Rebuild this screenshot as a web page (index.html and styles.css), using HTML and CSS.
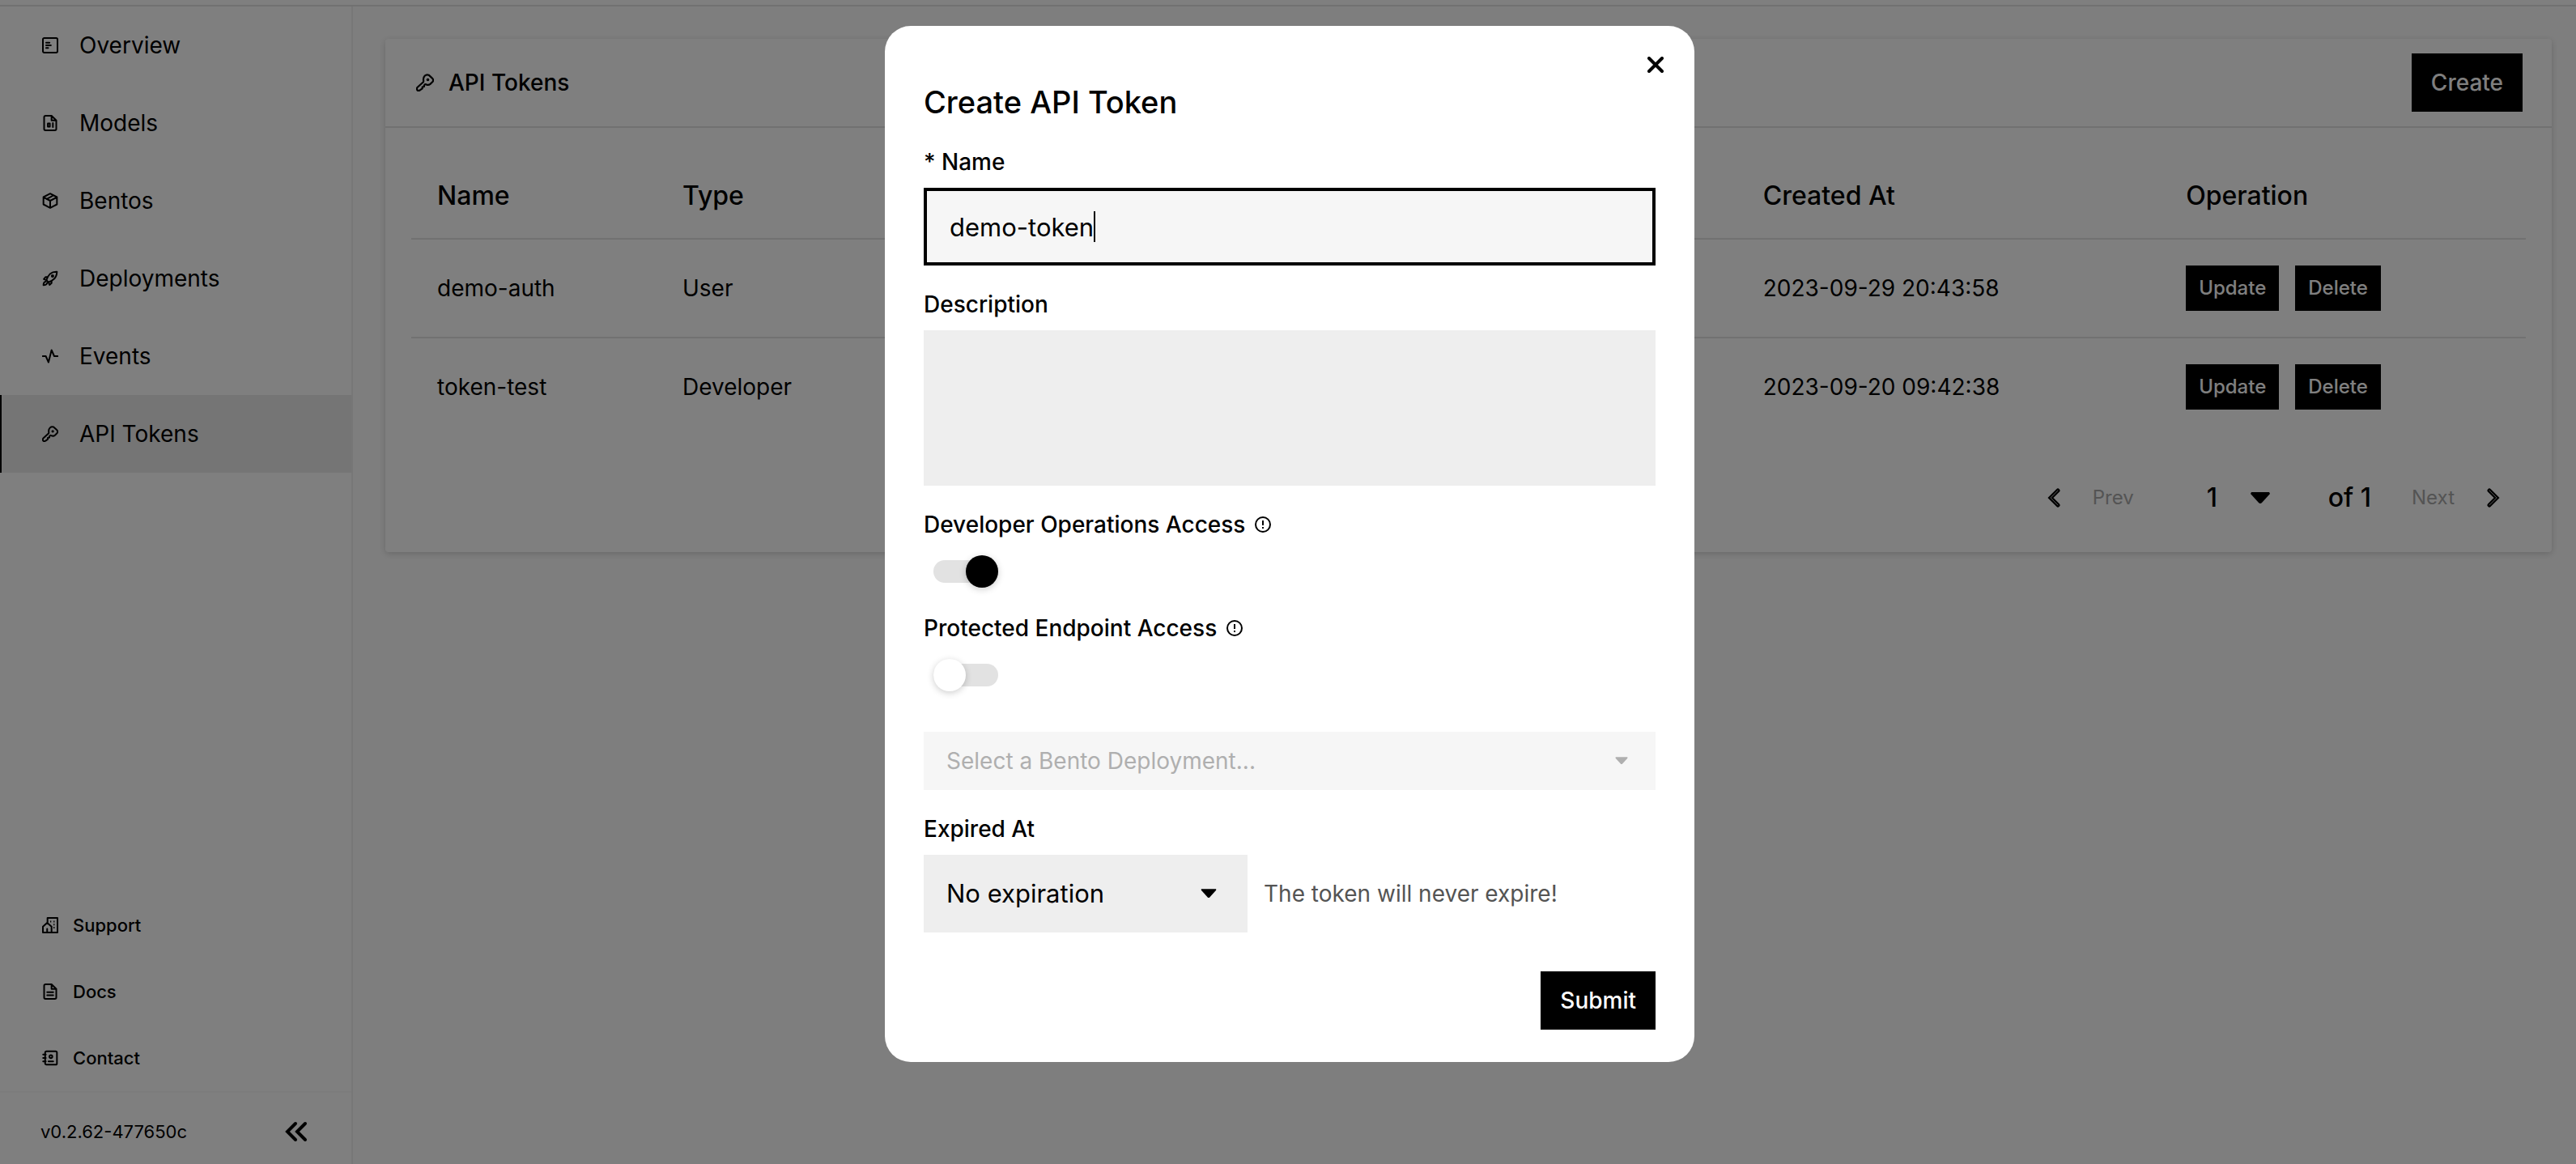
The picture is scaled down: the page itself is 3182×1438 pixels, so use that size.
FILE: index.html
```html
<!DOCTYPE html>
<html lang="en">
<head>
<meta charset="utf-8">
<title>API Tokens</title>
<link rel="stylesheet" href="styles.css">
</head>
<body>
<svg class="sprite" aria-hidden="true">
  <symbol id="i-key" viewBox="0 0 24 24"><path d="M10 9.600C9.400 6.800 10 4.600 11.800 2.800 13.200 1.400 15 1 17 1.800L22 6.400C23.400 8 23.400 9.600 22 11.200L19 14C17.600 15.200 15.600 15.400 13.800 14.600L12.200 14.200 10.800 15.800V17.400L8.400 18V20L5.600 22C4.200 23.200 2.600 23.200 1.600 22.200 .8 21.200 .8 19.800 1.600 18.600L9.800 11.200z"/><circle cx="15.800" cy="8.200" r=".8"/></symbol>
  <symbol id="i-file" viewBox="0 0 24 24"><path d="M14 1.200H5a2 2 0 0 0-2 2v17.600a2 2 0 0 0 2 2h14a2 2 0 0 0 2-2V8z M14 1.200V8h7"/></symbol>
</svg>
<div class="app">
  <header class="topbar"></header>
  <div class="body">
    <aside class="sidebar">
      <nav class="nav">
        <a class="nav-item" href="#"><svg class="icon" viewBox="0 0 24 24"><rect x="1.200" y="1.200" width="21.600" height="21.600" rx="2"/><path d="M6 8.200h5M6 12h7M6 15.800h3"/></svg>Overview</a>
        <a class="nav-item" href="#"><svg class="icon" viewBox="0 0 24 24"><use href="#i-file"/><path d="M8.500 12.500h3v5h-3zM16 12v6"/></svg>Models</a>
        <a class="nav-item" href="#"><svg class="icon" viewBox="0 0 24 24"><path d="M12 1.400l10 5.200v10.800l-10 5.200-10-5.200V6.600z M2.500 7l9.500 5 9.500-5M12 12v10M7 9.500l9.500-5.300"/></svg>Bentos</a>
        <a class="nav-item" href="#"><svg class="icon" viewBox="0 0 24 24"><path d="M9.500 17.500L6.500 14.500C7 12 9 8 12 5c3-2.600 6.500-3.200 10-3-.2 4-1 7.500-3.800 10.200C15.200 15 12 17 9.500 17.500zM8.500 10H5L2.500 13l4 1.500M14 15.500v3.500L11 21.500 9.500 17.500M5.500 16.500C3 17 2 19 2 22c3 0 5-1 5.500-3.500"/><circle cx="15.500" cy="8.500" r="1.200"/></svg>Deployments</a>
        <a class="nav-item" href="#"><svg class="icon" viewBox="0 0 24 24"><path d="M1 12h4.500L9.500 21 14 3l4 9h5"/></svg>Events</a>
        <a class="nav-item active" href="#"><svg class="icon" viewBox="0 0 24 24"><use href="#i-key"/></svg>API Tokens</a>
      </nav>
      <div class="links">
        <a class="link-item" href="#"><svg class="icon" viewBox="0 0 24 24"><path d="M8 8V1.200h14.800v21.600H1.200V14l6.300-5.500L14 14v8.800M7.500 22v-4.500"/><path class="dots" d="M12 6.500h1.500M17 6.500h1.500M17 11h1.500M17 15.500h1.500"/></svg>Support</a>
        <a class="link-item" href="#"><svg class="icon" viewBox="0 0 24 24"><use href="#i-file"/><path d="M7.500 13h9M7.500 17.500h9"/></svg>Docs</a>
        <a class="link-item" href="#"><svg class="icon" viewBox="0 0 24 24"><rect x="4.500" y="2" width="17.500" height="20" rx="2"/><path d="M1.500 7h4M1.500 12h4M1.500 17h4M9.500 17h7"/><circle cx="13" cy="10" r="2.200"/></svg>Contact</a>
      </div>
      <footer class="side-foot">
        <span>v0.2.62-477650c</span>
        <button class="collapse" type="button" aria-label="Collapse sidebar"><svg viewBox="0 0 28 28"><path d="M13 4L3 14l10 10M25 4L15 14l10 10"/></svg></button>
      </footer>
    </aside>
    <main class="main">
      <section class="card">
        <header class="card-head">
          <svg class="icon card-icon" viewBox="0 0 24 24"><use href="#i-key"/></svg>
          <h1 class="card-title">API Tokens</h1>
          <button class="btn" type="button">Create</button>
        </header>
        <div class="card-body">
          <table class="tokens">
            <thead><tr><th class="col-name">Name</th><th class="col-type">Type</th><th></th><th class="col-created">Created At</th><th class="col-ops">Operation</th></tr></thead>
            <tbody>
              <tr><td>demo-auth</td><td>User</td><td></td><td>2023-09-29 20:43:58</td><td><div class="row-actions"><button class="btn small" type="button">Update</button><button class="btn small" type="button">Delete</button></div></td></tr>
              <tr><td>token-test</td><td>Developer</td><td></td><td>2023-09-20 09:42:38</td><td><div class="row-actions"><button class="btn small" type="button">Update</button><button class="btn small" type="button">Delete</button></div></td></tr>
            </tbody>
          </table>
          <div class="pager">
            <button class="page-btn" type="button" disabled><svg class="chev" viewBox="0 0 16 24"><path d="M13 3L4 12l9 9"/><path class="inner" d="M13 3L4 12l9 9"/></svg>Prev</button>
            <div class="select-wrap page-select">
              <select aria-label="Page"><option>1</option></select>
              <svg class="caret" viewBox="0 0 24 14"><path d="M1 0h22l1 2-10 11q-2 2-4 0L0 2z"/></svg>
            </div>
            <span class="page-total">of 1</span>
            <button class="page-btn" type="button" disabled>Next<svg class="chev" viewBox="0 0 16 24"><path d="M3 3l9 9-9 9"/><path class="inner" d="M3 3l9 9-9 9"/></svg></button>
          </div>
        </div>
      </section>
    </main>
  </div>
</div>
<div class="overlay">
  <form class="modal" role="dialog" aria-modal="true" aria-labelledby="dlg-title">
    <button class="close" type="button" aria-label="Close"><svg viewBox="0 0 20 20"><path d="M2 2l16 16M18 2L2 18"/></svg></button>
    <h2 class="modal-title" id="dlg-title">Create API Token</h2>
    <label class="label" for="name">* Name</label>
    <div class="name-box"><input class="name-input" id="name" type="text" value="demo-token" size="10"><span class="cursor"></span></div>
    <label class="label" for="desc">Description</label>
    <textarea class="desc" id="desc"></textarea>
    <label class="label" for="dev">Developer Operations Access <svg class="info" viewBox="0 0 20 20"><circle cx="10" cy="10" r="9"/><path d="M10 5v6M10 13v2"/></svg></label>
    <div class="toggle-row"><input class="toggle" id="dev" type="checkbox" checked></div>
    <label class="label" for="end">Protected Endpoint Access <svg class="info" viewBox="0 0 20 20"><circle cx="10" cy="10" r="9"/><path d="M10 5v6M10 13v2"/></svg></label>
    <div class="toggle-row last"><input class="toggle" id="end" type="checkbox"></div>
    <div class="select-wrap deployment">
      <select aria-label="Bento Deployment" disabled><option>Select a Bento Deployment...</option></select>
      <svg class="caret" viewBox="0 0 24 14"><path d="M1 0h22v2L13 13h-2L1 2z"/></svg>
    </div>
    <label class="label" for="exp">Expired At</label>
    <div class="expiry">
      <div class="select-wrap expiration">
        <select id="exp"><option>No expiration</option></select>
        <svg class="caret" viewBox="0 0 24 14"><path d="M1 0h22v2L13 13h-2L1 2z"/></svg>
      </div>
      <span class="hint">The token will never expire!</span>
    </div>
    <div class="actions"><button class="btn" type="submit">Submit</button></div>
  </form>
</div>
</body>
</html>
```
FILE: styles.css
```css
* { box-sizing: border-box; }
body {
  margin: 0;
  background: #fff;
  color: #000;
  font: 28px/40px Inter, "Liberation Sans", sans-serif;
}
button, input, select, textarea { font: inherit; color: inherit; border: 0; border-radius: 0; margin: 0; }
button { cursor: pointer; }
svg { display: block; fill: none; stroke: currentColor; }
.sprite { position: absolute; width: 0; height: 0; }

/* Page frame */
.app { display: flex; flex-direction: column; height: 100vh; }
.topbar { height: 8px; border-bottom: 2px solid #e2e2e2; }
.body { display: flex; flex: 1; min-height: 0; }

/* Sidebar */
.sidebar { display: flex; flex-direction: column; flex: none; width: 436px; border-right: 2px solid #eee; }
.nav-item, .link-item { display: flex; align-items: center; color: inherit; text-decoration: none; }
.nav-item { height: 96px; gap: 26px; padding: 0 50px; border-left: 2px solid transparent; }
.nav-item.active { background: #ebebeb; border-left-color: #000; }
.icon { width: 20px; height: 20px; flex: none; stroke-width: 2.4; stroke-linejoin: round; stroke-linecap: round; }
.dots { stroke-linecap: butt; }
.links { margin-top: auto; }
.link-item { height: 82px; gap: 18px; padding: 0 52px; font-size: 22px; font-weight: 500; }
.side-foot {
  display: flex; align-items: center; justify-content: space-between;
  height: 90px; padding: 8px 54px 0 50px; border-top: 2px solid #f8f8f8; font-size: 22px;
}
.collapse { width: 28px; height: 28px; padding: 0; background: none; }
.collapse svg { width: 28px; height: 28px; stroke-width: 4; stroke-linecap: round; }

/* Token list */
.main { flex: 1; padding: 40px 30px 40px 40px; background: #fdfdfd; }
.card { background: #fff; border-radius: 4px; box-shadow: 0 2px 8px rgba(0, 0, 0, .18); }
.card-head { display: flex; align-items: center; height: 110px; padding: 0 36px 0 38px; border-bottom: 2px solid #e2e2e2; }
.card-icon { width: 22px; height: 22px; }
.card-title { flex: 1; margin: 0 0 0 18px; font-size: 28px; font-weight: 500; }
.btn { height: 72px; padding: 0 24px; background: #000; color: #fff; font-size: 28px; font-weight: 500; }
.btn.small { height: 56px; padding: 0 16px; font-size: 24px; line-height: 32px; }
.card-body { padding: 32px 32px 0; }
.tokens { width: 100%; table-layout: fixed; border-collapse: separate; border-spacing: 0; text-align: left; }
.tokens th { height: 106px; padding: 0 32px; font-size: 32px; font-weight: 500; border-bottom: 2px solid #e2e2e2; }
.tokens td { height: 122px; padding: 0 32px; white-space: nowrap; border-bottom: 2px solid #e2e2e2; }
.tokens tr:last-child td { border-bottom-color: transparent; }
.col-name { width: 11.6%; }
.col-type { width: 12%; }
.col-created { width: 20%; }
.col-ops { width: 17.3%; }
.row-actions { display: flex; gap: 20px; }
.pager { display: flex; align-items: center; justify-content: flex-end; height: 142px; padding: 8px 32px 0 0; }
.page-btn { display: flex; align-items: center; gap: 40px; padding: 0; background: none; font-size: 24px; color: #a8a8a8; }
.chev { width: 16px; height: 24px; stroke: #000; stroke-width: 5; stroke-linecap: round; }
.chev .inner { stroke: #a8a8a8; stroke-width: 1; }

/* Drop-downs */
.select-wrap { display: grid; align-items: center; }
.select-wrap > * { grid-area: 1 / 1; }
.select-wrap select { width: 100%; height: 100%; padding: 0; appearance: none; background: none; opacity: 1; }
.caret { justify-self: end; width: 20px; height: 12px; fill: currentColor; stroke: none; pointer-events: none; }
.page-select { width: 78px; height: 56px; margin: 0 72px 0 90px; font-size: 32px; font-weight: 500; }
.page-select .caret { width: 24px; height: 14px; }
.page-total { margin-right: 50px; font-size: 32px; font-weight: 500; }

/* Dialog */
.overlay { position: fixed; inset: 0; display: flex; justify-content: center; align-items: flex-start; padding: 32px 30px 32px 34px; background: rgba(0, 0, 0, .5); }
.modal { position: relative; display: flex; flex-direction: column; width: 1000px; padding: 68px 48px 40px; background: #fff; border-radius: 32px; }
.close { position: absolute; top: 32px; right: 32px; width: 32px; height: 32px; padding: 6px; background: none; }
.close svg { width: 20px; height: 20px; stroke-width: 4; stroke-linecap: round; }
.modal-title { margin: 0 0 32px; font-size: 38px; line-height: 52px; font-weight: 500; }
.label { display: flex; align-items: center; gap: 12px; height: 32px; margin-bottom: 16px; font-size: 28px; line-height: 32px; font-weight: 500; }
.info { width: 20px; height: 20px; stroke-width: 2; }
.name-box { display: flex; align-items: center; height: 96px; margin-bottom: 32px; padding: 0 28px; background: #f6f6f6; border: 4px solid #000; font-size: 31px; }
.name-input { field-sizing: content; height: 48px; padding: 0; background: none; outline: 0; }
.cursor { width: 2px; height: 38px; background: #000; }
.desc { display: block; height: 192px; margin-bottom: 32px; padding: 24px 28px; background: #eee; resize: none; }
.toggle-row { height: 48px; margin-bottom: 32px; padding: 6px 12px 0; }
.toggle-row.last { margin-bottom: 48px; }
.toggle { position: relative; display: block; appearance: none; width: 80px; height: 40px; }
.toggle::before { content: ""; position: absolute; inset: 6px 0; border-radius: 14px; background: #e2e2e2; }
.toggle::after { content: ""; position: absolute; top: 0; left: 0; width: 40px; height: 40px; border-radius: 50%; background: #fff; box-shadow: 0 2px 8px rgba(0, 0, 0, .2); }
.toggle:checked::after { left: 40px; background: #000; }
.deployment { height: 72px; margin-bottom: 32px; padding: 0 34px 0 28px; background: #f6f6f6; color: #afafaf; }
.deployment .caret { width: 16px; height: 10px; }
.expiry { display: flex; align-items: center; gap: 20px; margin-bottom: 48px; }
.expiration { width: 400px; height: 96px; padding: 0 38px 0 28px; background: #eee; font-size: 31px; }
.hint { color: #545454; }
.actions { display: flex; justify-content: flex-end; }
```
